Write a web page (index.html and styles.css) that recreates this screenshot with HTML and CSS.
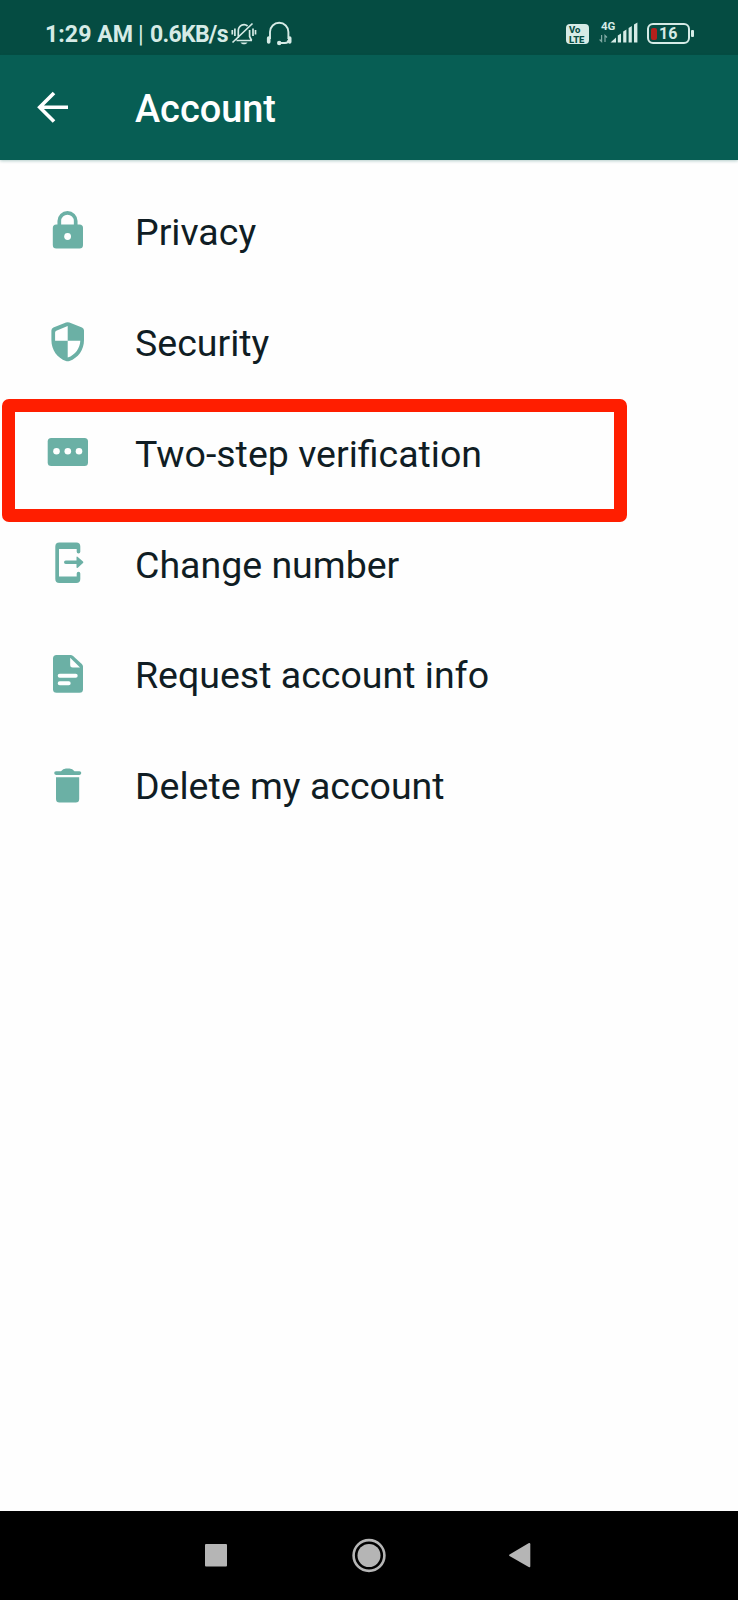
FILE: index.html
```html
<!DOCTYPE html>
<html lang="en">
<head>
<meta charset="utf-8">
<title>Account</title>
<link rel="stylesheet" href="styles.css">
</head>
<body>
<div class="screen">
  <div class="status">
    <span class="time">1:29 AM</span><span class="bar">|</span><span class="speed">0.6KB/s</span>
    <svg class="bell" width="26" height="26" viewBox="0 0 26 26" fill="none" stroke="currentColor" stroke-width="1.7">
      <path d="M5.5 19.5h15.500M7.300 17V10a5.700 6.200 0 0 1 9.300-5M18.600 9v6.500l2 4M1.500 21.500 21.500 2.500"/>
      <path d="M3.900 7.500v7.500M1.300 9v4.500M22 7.500v7.500M24.500 9v4.500"/>
      <path d="M9.500 21.500h7c-1 2.400-6 2.400-7 0z" fill="currentColor" stroke="none"/>
    </svg>
    <svg class="phones" width="26" height="26" viewBox="0 0 26 26" fill="none" stroke="currentColor" stroke-width="1.900">
      <path d="M4 18V11a9.200 9.200 0 0 1 18.400 0v7M22.500 19c0 2.500-1.500 3-3.500 3h-5"/>
      <path d="M2.700 17v4M23.700 17v4" stroke-width="3.600" stroke-linecap="round"/>
      <circle cx="13.200" cy="22" r="2.200" fill="currentColor" stroke="none"/>
    </svg>
    <span class="volte"><span>Vo</span><span>LTE</span></span>
    <div class="signal">
      <span class="net">4G</span>
      <svg width="42" height="22" viewBox="0 0 42 22" fill="currentColor">
        <path d="M2.600 13v6.500l-2-2M6 20v-6.500l2 2" fill="none" stroke="currentColor" stroke-width="1.200" opacity=".6"/>
        <path d="M11.500 20.500l5.500-5v5z"/>
        <path d="M18.800 13.500l3.200-2v9h-3.200zM24.200 9.500l3.200-2v13h-3.200zM29.600 6l3.200-2v16.500h-3.200zM35 2.500l3.400-2v20H35z"/>
      </svg>
    </div>
    <div class="battery"><div class="cell"><i class="charge"></i><span>16</span></div><i class="tip"></i></div>
  </div>
  <header class="appbar">
    <svg width="32" height="32" viewBox="0 0 32 32" fill="none" stroke="#fff" stroke-width="3.600"><path d="M31 16.300H3M17 2 2.700 16.300 17 30.600"/></svg>
    <h1>Account</h1>
  </header>
  <main class="list">
    <div class="row">
      <svg class="ico" viewBox="0 0 48 48"><path d="M15.300 19v-5a8.200 8.200 0 0 1 16.400 0V19" fill="none" stroke="currentColor" stroke-width="3.700"/><rect x="8.800" y="17.500" width="30.200" height="24" rx="3.500"/><circle cx="23.600" cy="29.500" r="3.400" fill="#fff"/></svg>
      <span class="label">Privacy</span>
    </div>
    <div class="row">
      <svg class="ico" viewBox="0 0 48 48"><path d="M22 4.600q1.700-.8 3.400 0l12.600 5q2 .8 2 3V22c0 10-6 18-14.500 21q-1.800.7-3.600 0C13.400 40 7.400 32 7.400 22v-9.400q0-2.200 2-3z"/><path d="M23.700 8v14.800H11.100v-8.400q0-1.200 1.200-1.700zM23.700 22.800h12.600C36 30 31.500 37 23.700 39.600z" fill="#fff"/></svg>
      <span class="label">Security</span>
    </div>
    <div class="row">
      <svg class="ico" viewBox="0 0 48 48"><rect x="3.700" y="10" width="40.300" height="28" rx="3.500"/><g fill="#fff"><circle cx="12.500" cy="23.300" r="3.300"/><circle cx="23.800" cy="23.300" r="3.300"/><circle cx="35" cy="23.300" r="3.300"/></g></svg>
      <span class="label">Two-step verification</span>
      <div class="highlight"></div>
    </div>
    <div class="row">
      <svg class="ico" viewBox="0 0 48 48"><path d="M15.300 3.500h17q4 0 4 4v5.200q0 1.800-1.800 1.800t-1.800-1.800V10H15v27.500h17.700v-3q0-1.800 1.800-1.800t1.800 1.800V40q0 4-4 4h-17q-4 0-4-4V7.500q0-4 4-4z"/><path d="M21.800 21.500h10.700v-3q0-1.600 1.300-.6l5.200 4.700q.8.700 0 1.400l-5.200 4.700q-1.300 1-1.300-.6v-3H21.800a1.800 1.800 0 0 1 0-3.600z"/></svg>
      <span class="label">Change number</span>
    </div>
    <div class="row">
      <svg class="ico" viewBox="0 0 48 48"><path d="M12.500 5h14q1.500 0 2.600 1l8.700 8q1.200 1.200 1.200 2.700v22.500q0 3.500-3.500 3.500h-23Q9 42.700 9 39.200V8.500Q9 5 12.500 5z"/><path d="M26.200 7.800 36 17.600h-7.300q-2.500 0-2.500-2.500z" fill="#fff"/><path d="M15.700 25.800h16M15.700 33.300h9" stroke="#fff" stroke-width="4" stroke-linecap="round"/></svg>
      <span class="label">Request account info</span>
    </div>
    <div class="row">
      <svg class="ico" viewBox="0 0 48 48"><path d="M12 10.300h5q2-2.800 5-2.800h3.500q3 0 5 2.800h5a1.800 1.800 0 0 1 0 3.600H12a1.800 1.800 0 0 1 0-3.600zM12 16.300h23.200v21.800q0 3.500-3.500 3.500H15.500q-3.500 0-3.500-3.500z"/></svg>
      <span class="label">Delete my account</span>
    </div>
  </main>
  <nav class="navbar">
    <svg width="738" height="88" viewBox="0 0 738 88" fill="#b5b5b5"><rect x="205" y="33" width="22" height="22.500" rx="1"/><circle cx="369" cy="44.500" r="11.500"/><circle cx="369" cy="44.500" r="15.400" fill="none" stroke="#b5b5b5" stroke-width="2.600"/><path d="M509.500 43.600 528.500 32.300q1.800-.8 1.800 1v22q0 1.600-1.600.7L509.500 45q-1-.7 0-1.400z"/></svg>
  </nav>
</div>
</body>
</html>
```
FILE: styles.css
```css
body { margin: 0; font-family: Roboto, "Liberation Sans", sans-serif; }
.screen { width: 738px; height: 1600px; display: flex; flex-direction: column; background: #fefefe; overflow: hidden; }
.status { height: 55px; box-sizing: border-box; padding: 14px 44px 0 45px; background: #054c42; color: #d6ebe6; display: flex; align-items: flex-start; font-weight: 700; font-size: 23.200px; line-height: 41px; white-space: nowrap; }
.time { width: 93px; }
.bar { width: 12px; font-weight: 400; }
.speed { width: 81px; font-size: 23px; letter-spacing: -0.700px; }
.bell { margin-top: 7px; }
.phones { margin: 7px 0 0 9px; }
.volte { margin: 10px 10px 0 auto; width: 23px; height: 20px; border-radius: 4px; background: #d6ebe6; color: #054c42; display: flex; flex-direction: column; font-size: 9.500px; font-weight: 800; line-height: 9.500px; box-sizing: border-box; padding: 1px 0 0 3px; }
.signal { position: relative; width: 42px; height: 22px; margin-top: 8px; line-height: 0; }
.net { position: absolute; left: 2px; top: -1px; font-size: 11.500px; line-height: 10px; font-weight: 700; }
.battery { display: flex; align-items: center; gap: 1px; margin: 9px 0 0 6px; }
.cell { width: 43px; height: 21px; box-sizing: border-box; border: 2.500px solid #d6ebe6; border-radius: 6px; display: flex; align-items: center; padding-left: 2px; gap: 2px; font-size: 16px; line-height: 16px; font-weight: 700; }
.charge { width: 6px; height: 12px; border-radius: 2px; background: #b3201c; }
.tip { width: 3px; height: 7px; border-radius: 1px; background: #d6ebe6; }
.appbar { position: relative; height: 105px; box-sizing: border-box; padding: 0 0 0 37px; background: #075e54; display: flex; align-items: center; gap: 66px; box-shadow: 0 1px 3px rgba(7, 94, 84, .3); }
.appbar svg { margin-top: -1px; }
.appbar h1 { margin: 3px 0 0; color: #fff; font-weight: 500; font-size: 37.900px; line-height: 44px; }
.list { flex: 1; padding-top: 15.400px; }
.row { position: relative; height: 110.800px; padding-left: 44px; display: flex; align-items: center; gap: 43px; }
.ico { width: 48px; height: 48px; color: #6bb0a5; fill: currentColor; }
.label { font-size: 37.500px; line-height: 44px; color: #101d24; padding-top: 3px; white-space: nowrap; }
.highlight { position: absolute; left: 1.500px; top: 2px; width: 625.500px; height: 123.500px; box-sizing: border-box; border: 13.500px solid #ff1e00; border-radius: 7px; z-index: 1; }
.navbar { height: 89px; background: #000; }
.navbar svg { display: block; }
```
